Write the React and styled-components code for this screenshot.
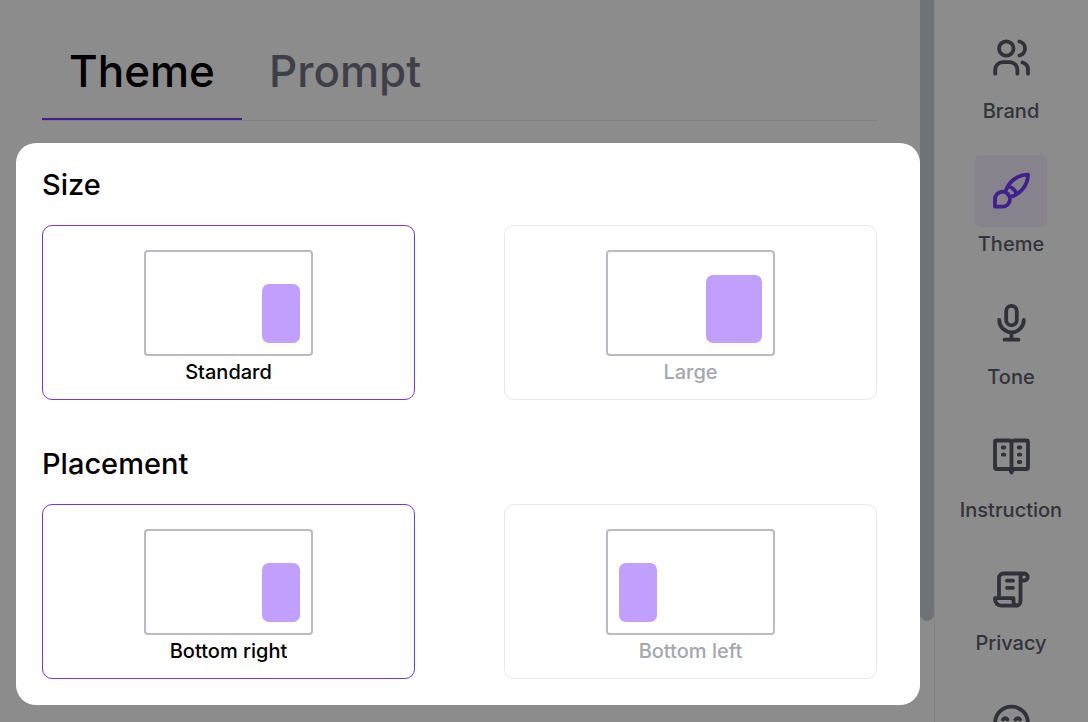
import React from "react";
import styled, { createGlobalStyle } from "styled-components";

const GlobalStyle = createGlobalStyle`
  *, *::before, *::after { box-sizing: border-box; }
  body {
    margin: 0;
    background: #8c8c8c;
    font-family: Inter, "Liberation Sans", sans-serif;
    font-weight: 500;
    color: #000;
  }
  button { font: inherit; color: inherit; background: none; border: 0; padding: 0; cursor: pointer; }
`;

const Page = styled.div`
  display: flex;
  height: 100vh;
  overflow: hidden;
`;

const Main = styled.main`
  flex: 1;
  min-width: 0;
  padding: 24px 0 0 16px;
`;

const Tabs = styled.div`
  display: flex;
  margin: 0 43px 22px 26px;
  border-bottom: 1px solid #7f7f80;
`;

const Tab = styled.button`
  && {
    height: 96px;
    padding: 0 27px;
    font-size: 44px;
    line-height: 56px;
    color: ${(p) => (p.$active ? "#000" : "#3f3f49")};
    border-bottom: 2px solid ${(p) => (p.$active ? "#40208a" : "transparent")};
  }
`;

const Panel = styled.form`
  padding: 22px 43px 26px 26px;
  background: #fff;
  border-radius: 20px;
`;

const Group = styled.fieldset`
  margin: 0;
  padding: 0;
  border: 0;
  min-width: 0;

  & + & { margin-top: 44px; }
`;

const Legend = styled.legend`
  padding: 0;
  margin-bottom: 20px;
  font-size: 29px;
  line-height: 40px;
`;

const Options = styled.div`
  display: grid;
  grid-template-columns: 1fr 1fr;
  gap: 89px;
`;

const OptionCard = styled.label`
  display: flex;
  flex-direction: column;
  align-items: center;
  padding: 24px 0 11px;
  border: 1px solid #e8e8ea;
  border-radius: 10px;
  font-size: 20px;
  line-height: 32px;
  color: #a5a7af;
  cursor: pointer;

  &:has(input:checked) {
    border-color: #7435ea;
    color: #000;
  }
`;

const HiddenRadio = styled.input`
  position: absolute;
  opacity: 0;
  pointer-events: none;
`;

const Frame = styled.span`
  display: flex;
  align-items: flex-end;
  justify-content: ${(p) => (p.$side === "left" ? "flex-start" : "flex-end")};
  width: 169px;
  height: 106px;
  padding: 11px;
  border: 2px solid #babac3;
  border-radius: 4px;
`;

const Widget = styled.span`
  width: ${(p) => (p.$large ? 56 : 38)}px;
  height: ${(p) => (p.$large ? 68 : 59)}px;
  border-radius: 7px;
  background: #c19ffc;
`;

const ScrollTrack = styled.div`
  flex: none;
  width: 14px;
`;

const ScrollThumb = styled.div`
  height: 86%;
  background: #717277;
  border-radius: 0 0 7px 7px;
`;

const Sidebar = styled.nav`
  flex: none;
  display: flex;
  flex-direction: column;
  align-items: center;
  gap: 28px;
  width: 154px;
  padding: 22px 1px 0 0;
  border-left: 1px solid #848485;
`;

const NavItem = styled.button`
  && {
    display: flex;
    flex-direction: column;
    align-items: center;
    gap: 1px;
    font-size: 20px;
    line-height: 32px;
    color: #33333c;
  }
`;

const IconTile = styled.span`
  display: flex;
  align-items: center;
  justify-content: center;
  width: 72px;
  height: 72px;
  border-radius: 6px;
  color: ${(p) => (p.$active ? "#40208a" : "#31313a")};
  background: ${(p) => (p.$active ? "#87838d" : "transparent")};
`;

const Glyph = styled.svg`
  width: 44px;
  height: 44px;
  fill: none;
  stroke: currentColor;
  stroke-width: 3.8;
  stroke-linecap: round;
  stroke-linejoin: round;
`;

const navItems = [
  {
    name: "Brand",
    glyph: (
      <>
        <circle cx="17.3" cy="12.5" r="7.2" />
        <path d="M6.2 37.700v-4a7.500 7.500 0 0 1 7.500-7.500h7.200a7.500 7.500 0 0 1 7.500 7.500v4M30.500 5.500a7.200 7.200 0 0 1 0 14M33.500 26.500a7.500 7.500 0 0 1 5.500 7.200v4" />
      </>
    ),
  },
  {
    name: "Theme",
    active: true,
    glyph: (
      <path d="M6 37.700V30.200a7.500 7.500 0 1 1 7.500 7.500ZM16.300 23C19 14 27 5.600 39 5.600C39 17 30.500 26 20.600 28M19.500 17.200Q25.500 19 27.500 25" />
    ),
  },
  {
    name: "Tone",
    glyph: (
      <>
        <rect x="17.2" y="3.800" width="10.6" height="19.500" rx="5.3" />
        <path d="M10.200 18a12.300 12.300 0 0 0 24.600 0M22.500 30.300v7.400M15.500 37.700h14" />
      </>
    ),
  },
  {
    name: "Instruction",
    glyph: (
      <>
        <path d="M22.500 7.200L20.800 5.500H7.500Q6 5.500 6 7V32.500Q6 34 7.500 34H20.800L22.500 37.500L24.200 34H37.500Q39 34 39 32.500V7Q39 5.500 37.500 5.500H24.200ZM22.500 7.200V36" />
        <path d="M13.800 12.500h1.500M13.800 19.700h1.500M29.800 12.500h1.500M29.800 19.700h1.500M29.800 27h1.500" />
      </>
    ),
  },
  {
    name: "Privacy",
    glyph: (
      <path d="M31.500 12.500V33a4.700 4.700 0 0 1-4.700 4.700H12.500A6.500 6.500 0 0 1 6 31.200V30.200H24.500V33.500Q24.500 37 27.500 37.700M10 30V10A4.500 4.500 0 0 1 14.500 5.500H35.200a3.500 3.500 0 0 1 0 7H31.500V9A3.500 3.500 0 0 1 35 5.500M18 12.700h6M18 19.900h6" />
    ),
  },
  {
    name: "Persona",
    iconOnly: true,
    glyph: (
      <>
        <circle cx="22.5" cy="22" r="16.400" />
        <path d="M14 18.500q2.200-2.500 4.400 0M26.600 18.500q2.200-2.500 4.400 0M15 27q7.500 7 15 0" />
      </>
    ),
  },
];

const optionGroups = [
  {
    title: "Size",
    name: "size",
    options: [{ label: "Standard" }, { label: "Large", large: true }],
  },
  {
    title: "Placement",
    name: "placement",
    options: [{ label: "Bottom right" }, { label: "Bottom left", side: "left" }],
  },
];

export default function App() {
  return (
    <>
      <GlobalStyle />
      <Page>
        <Main>
          <Tabs role="tablist">
            <Tab role="tab" aria-selected="true" $active>Theme</Tab>
            <Tab role="tab" aria-selected="false">Prompt</Tab>
          </Tabs>
          <Panel>
            {optionGroups.map((group) => (
              <Group key={group.name}>
                <Legend>{group.title}</Legend>
                <Options>
                  {group.options.map((option, i) => (
                    <OptionCard key={option.label}>
                      <HiddenRadio type="radio" name={group.name} defaultChecked={i === 0} />
                      <Frame $side={option.side}>
                        <Widget $large={option.large} />
                      </Frame>
                      {option.label}
                    </OptionCard>
                  ))}
                </Options>
              </Group>
            ))}
          </Panel>
        </Main>
        <ScrollTrack>
          <ScrollThumb />
        </ScrollTrack>
        <Sidebar>
          {navItems.map(({ name, glyph, active, iconOnly }) => (
            <NavItem key={name} aria-label={name}>
              <IconTile $active={active}>
                <Glyph viewBox="0 0 44 44" aria-hidden="true">{glyph}</Glyph>
              </IconTile>
              {!iconOnly && name}
            </NavItem>
          ))}
        </Sidebar>
      </Page>
    </>
  );
}
